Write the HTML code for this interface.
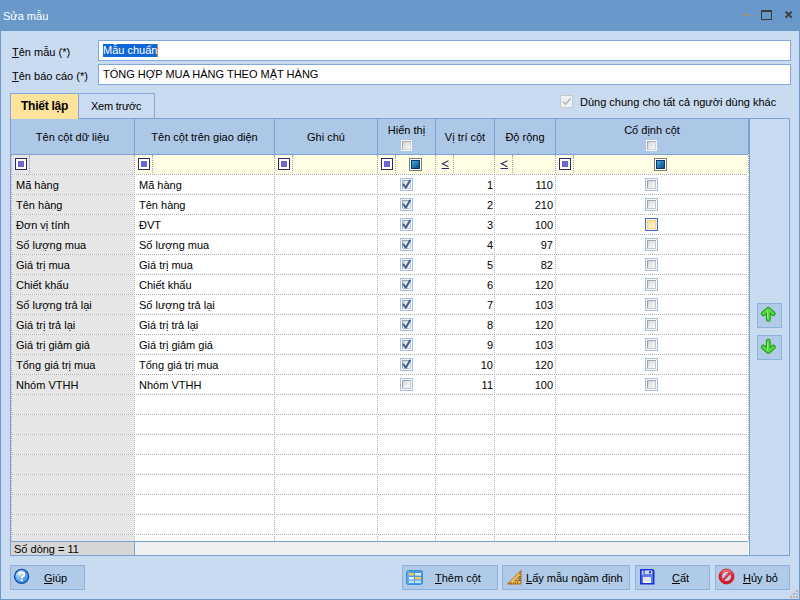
<!DOCTYPE html>
<html><head><meta charset="utf-8">
<style>
*,*:before,*:after{box-sizing:border-box;margin:0;padding:0}
html,body{width:800px;height:600px;overflow:hidden;font-family:"Liberation Sans",sans-serif;font-size:11px;color:#000}
.a{position:absolute}
.t{position:absolute;white-space:nowrap;line-height:13px}
.u{text-decoration:underline;text-underline-offset:1px}
.hd{position:absolute;white-space:nowrap;line-height:13px}
.hl{position:absolute;height:1px;background:repeating-linear-gradient(to right,#a0a0a0 0 1px,transparent 1px 2px)}
.vl{position:absolute;width:1px;background:repeating-linear-gradient(to bottom,#a0a0a0 0 1px,transparent 1px 2px)}
.fi{position:absolute;width:12px;height:12px;border:1px solid #2b2b6b;background:#fffff4}
.fi:after{content:"";position:absolute;left:2px;top:2px;width:6px;height:6px;background:#6a66d4}
.bq{position:absolute;width:13px;height:13px;border:1px solid #7a7a7a;background:#fff}
.bq:after{content:"";position:absolute;left:1px;top:1px;width:9px;height:9px;border:1px solid #10385e;background:linear-gradient(135deg,#3fb2e6,#1a6fa8 60%,#0e4a7c)}
.cb{position:absolute;width:13px;height:13px;border:1px solid #a2c0e5;background:#fcfcfa}
.cb:before{content:"";position:absolute;left:1px;top:1px;width:9px;height:9px;border:1px solid;border-color:#9ea6b1 #c4c9cf #c4c9cf #9ea6b1;background:linear-gradient(135deg,#d2d6db,#eceef0 55%,#f8f8f8);}
.cbh{position:absolute;width:11px;height:11px;border:1px solid #f6f6f4;background:#f6f6f4}
.cbh:before{content:"";position:absolute;left:0;top:0;width:9px;height:9px;border:1px solid;border-color:#a8adb3 #cfd2d6 #cfd2d6 #a8adb3;background:linear-gradient(135deg,#cdd0d4,#e9eaec 55%,#f8f8f8)}
.btn{position:absolute;height:25px;background:#b0cbe8;border:1px solid #8db0dc}
</style></head><body>
<div class="a" style="left:0;top:0;width:800px;height:600px;background:#6a98ca"></div>
<div class="a" style="left:1px;top:31px;width:798px;height:568px;background:#c9dbf0"></div>

<div class="t" style="left:3px;top:10px;color:#fff;font-size:11px">Sửa mẫu</div>
<div class="a" style="left:743px;top:14px;width:7px;height:2px;background:#a3907f"></div>
<div class="a" style="left:761px;top:10px;width:11px;height:10px;border:1px solid #3c3c3c;border-top-width:2px"></div>
<svg class="a" style="left:784px;top:10px" width="10" height="10"><path d="M1.6 1.6L7.6 7.6M7.6 1.6L1.6 7.6" stroke="#3c3c3c" stroke-width="2"/></svg>
<div class="t" style="left:12px;top:46px"><span class="u">T</span>ên mẫu (*)</div>
<div class="t" style="left:12px;top:70px"><span class="u">T</span>ên báo cáo (*)</div>
<div class="a" style="left:98px;top:40px;width:693px;height:21px;background:#fff;border:1px solid #84a8d9"></div>
<div class="a" style="left:98px;top:64px;width:693px;height:21px;background:#fff;border:1px solid #84a8d9"></div>
<div class="a" style="left:103px;top:44px;width:55px;height:13px;background:#0f66d8"></div>
<div class="a" style="left:157px;top:44px;width:1px;height:13px;background:#e08030"></div>
<div class="t" style="left:103px;top:44px;color:#fff">Mẫu chuẩn</div>
<div class="t" style="left:103px;top:68px">TỔNG HỢP MUA HÀNG THEO MẶT HÀNG</div>
<div class="a" style="left:10px;top:93px;width:69px;height:26px;background:#fde39c;border:1px solid #84a8d9;border-bottom:none"></div>
<div class="a" style="left:78px;top:93px;width:77px;height:26px;background:#cadcf1;border:1px solid #84a8d9;border-bottom:none"></div>
<div class="t" style="left:21px;top:100px;font-weight:bold;font-size:12px;letter-spacing:-0.25px">Thiết lập</div>
<div class="t" style="left:91px;top:100px;letter-spacing:-0.25px">Xem trước</div>
<div class="a" style="left:560px;top:95px;width:13px;height:13px;border:1px solid #c6c9cc;background:#eef1f4"></div>
<svg class="a" style="left:560px;top:95px" width="13" height="13"><path d="M3 6.5L5.5 9L10.5 3.5" stroke="#b4b8bc" stroke-width="1.6" fill="none"/></svg>
<div class="t" style="left:580px;top:96px">Dùng chung cho tất cả người dùng khác</div>
<div class="a" style="left:10px;top:118px;width:740px;height:438px;background:#fff;border:1px solid #79a1d2"></div>
<div class="a" style="left:11px;top:119px;width:737px;height:35px;background:#adc8e6"></div>
<div class="a" style="left:11px;top:154px;width:737px;height:1px;background:#79a1d2"></div>
<div class="a" style="left:134px;top:119px;width:1px;height:35px;background:#79a1d2"></div>
<div class="a" style="left:274px;top:119px;width:1px;height:35px;background:#79a1d2"></div>
<div class="a" style="left:377px;top:119px;width:1px;height:35px;background:#79a1d2"></div>
<div class="a" style="left:435px;top:119px;width:1px;height:35px;background:#79a1d2"></div>
<div class="a" style="left:494px;top:119px;width:1px;height:35px;background:#79a1d2"></div>
<div class="a" style="left:555px;top:119px;width:1px;height:35px;background:#79a1d2"></div>
<div class="a" style="left:748px;top:119px;width:1px;height:35px;background:#79a1d2"></div>
<div class="a" style="left:11px;top:118px;width:67px;height:1px;background:#fde39c"></div>
<div class="hd" style="left:11px;width:123px;top:131px;text-align:center">Tên cột dữ liệu</div>
<div class="hd" style="left:135px;width:139px;top:131px;text-align:center">Tên cột trên giao diện</div>
<div class="hd" style="left:275px;width:102px;top:131px;text-align:center">Ghi chú</div>
<div class="hd" style="left:378px;width:57px;top:124px;text-align:center">Hiển thị</div>
<div class="cbh" style="left:401px;top:140px"></div>
<div class="hd" style="left:436px;width:58px;top:131px;text-align:center">Vị trí cột</div>
<div class="hd" style="left:495px;width:60px;top:131px;text-align:center">Độ rộng</div>
<div class="hd" style="left:556px;width:192px;top:124px;text-align:center">Cố định cột</div>
<div class="cbh" style="left:646px;top:140px"></div>
<div class="a" style="left:11px;top:155px;width:737px;height:19px;background:#fffde3"></div>
<div class="a" style="left:11px;top:155px;width:123px;height:386px;background:#e6e6e6"></div>
<div class="fi" style="left:15px;top:158px"></div>
<div class="fi" style="left:138px;top:158px"></div>
<div class="fi" style="left:278px;top:158px"></div>
<div class="fi" style="left:381px;top:158px"></div>
<div class="fi" style="left:559px;top:158px"></div>
<div class="a" style="left:29px;top:155px;width:1px;height:19px;background:repeating-linear-gradient(to bottom,#a0a0a0 0 1px,transparent 1px 2px);background-position:0 1px"></div>
<div class="a" style="left:152px;top:155px;width:1px;height:19px;background:repeating-linear-gradient(to bottom,#a0a0a0 0 1px,transparent 1px 2px);background-position:0 1px"></div>
<div class="a" style="left:292px;top:155px;width:1px;height:19px;background:repeating-linear-gradient(to bottom,#a0a0a0 0 1px,transparent 1px 2px);background-position:0 1px"></div>
<div class="a" style="left:395px;top:155px;width:1px;height:19px;background:repeating-linear-gradient(to bottom,#a0a0a0 0 1px,transparent 1px 2px);background-position:0 1px"></div>
<div class="a" style="left:573px;top:155px;width:1px;height:19px;background:repeating-linear-gradient(to bottom,#a0a0a0 0 1px,transparent 1px 2px);background-position:0 1px"></div>
<div class="bq" style="left:409px;top:158px"></div>
<div class="bq" style="left:654px;top:158px"></div>
<svg class="a" style="left:441px;top:160px" width="9" height="10"><path d="M7.5 0.8L1.2 3.8L7.5 6.8" stroke="#2b2b6b" stroke-width="1.1" fill="none"/><path d="M0.5 8.5H8" stroke="#2b2b6b" stroke-width="1"/></svg>
<svg class="a" style="left:500px;top:160px" width="9" height="10"><path d="M7.5 0.8L1.2 3.8L7.5 6.8" stroke="#2b2b6b" stroke-width="1.1" fill="none"/><path d="M0.5 8.5H8" stroke="#2b2b6b" stroke-width="1"/></svg>
<div class="a" style="left:453px;top:155px;width:1px;height:19px;background:repeating-linear-gradient(to bottom,#a0a0a0 0 1px,transparent 1px 2px);background-position:0 1px"></div>
<div class="a" style="left:512px;top:155px;width:1px;height:19px;background:repeating-linear-gradient(to bottom,#a0a0a0 0 1px,transparent 1px 2px);background-position:0 1px"></div>
<div class="a" style="left:11px;top:155px;width:1px;height:19px;background:repeating-linear-gradient(to bottom,#b0b0b0 0 1px,transparent 1px 2px);background-position:0 1px"></div>
<div class="a" style="left:11px;top:175px;width:1px;height:366px;background:repeating-linear-gradient(to bottom,#b0b0b0 0 1px,#f8f8f8 1px 2px);background-position:0 1px"></div>
<div class="a" style="left:134px;top:155px;width:1px;height:19px;background:repeating-linear-gradient(to bottom,#a0a0a0 0 1px,transparent 1px 2px);background-position:0 1px"></div>
<div class="a" style="left:134px;top:175px;width:1px;height:366px;background:repeating-linear-gradient(to bottom,#b0b0b0 0 1px,#ffffff 1px 2px);background-position:0 1px"></div>
<div class="a" style="left:274px;top:155px;width:1px;height:19px;background:repeating-linear-gradient(to bottom,#a0a0a0 0 1px,transparent 1px 2px);background-position:0 1px"></div>
<div class="a" style="left:274px;top:175px;width:1px;height:366px;background:repeating-linear-gradient(to bottom,#b0b0b0 0 1px,#ffffff 1px 2px);background-position:0 1px"></div>
<div class="a" style="left:377px;top:155px;width:1px;height:19px;background:repeating-linear-gradient(to bottom,#a0a0a0 0 1px,transparent 1px 2px);background-position:0 1px"></div>
<div class="a" style="left:377px;top:175px;width:1px;height:366px;background:repeating-linear-gradient(to bottom,#b0b0b0 0 1px,#ffffff 1px 2px);background-position:0 1px"></div>
<div class="a" style="left:435px;top:155px;width:1px;height:19px;background:repeating-linear-gradient(to bottom,#a0a0a0 0 1px,transparent 1px 2px);background-position:0 1px"></div>
<div class="a" style="left:435px;top:175px;width:1px;height:366px;background:repeating-linear-gradient(to bottom,#b0b0b0 0 1px,#ffffff 1px 2px);background-position:0 1px"></div>
<div class="a" style="left:494px;top:155px;width:1px;height:19px;background:repeating-linear-gradient(to bottom,#a0a0a0 0 1px,transparent 1px 2px);background-position:0 1px"></div>
<div class="a" style="left:494px;top:175px;width:1px;height:366px;background:repeating-linear-gradient(to bottom,#b0b0b0 0 1px,#ffffff 1px 2px);background-position:0 1px"></div>
<div class="a" style="left:555px;top:155px;width:1px;height:19px;background:repeating-linear-gradient(to bottom,#a0a0a0 0 1px,transparent 1px 2px);background-position:0 1px"></div>
<div class="a" style="left:555px;top:175px;width:1px;height:366px;background:repeating-linear-gradient(to bottom,#b0b0b0 0 1px,#ffffff 1px 2px);background-position:0 1px"></div>
<div class="a" style="left:748px;top:155px;width:1px;height:19px;background:repeating-linear-gradient(to bottom,#a0a0a0 0 1px,transparent 1px 2px);background-position:0 1px"></div>
<div class="a" style="left:748px;top:175px;width:1px;height:366px;background:repeating-linear-gradient(to bottom,#b0b0b0 0 1px,#ffffff 1px 2px);background-position:0 1px"></div>
<div class="a" style="left:11px;top:174px;width:123px;height:1px;background:repeating-linear-gradient(to right,#b0b0b0 0 1px,#f8f8f8 1px 2px);background-position:1px 0"></div>
<div class="a" style="left:134px;top:174px;width:614px;height:1px;background:repeating-linear-gradient(to right,#acacac 0 1px,#ffffff 1px 2px);background-position:0px 0"></div>
<div class="a" style="left:11px;top:194px;width:123px;height:1px;background:repeating-linear-gradient(to right,#b0b0b0 0 1px,#f8f8f8 1px 2px);background-position:1px 0"></div>
<div class="a" style="left:134px;top:194px;width:614px;height:1px;background:repeating-linear-gradient(to right,#acacac 0 1px,#ffffff 1px 2px);background-position:0px 0"></div>
<div class="a" style="left:11px;top:214px;width:123px;height:1px;background:repeating-linear-gradient(to right,#b0b0b0 0 1px,#f8f8f8 1px 2px);background-position:1px 0"></div>
<div class="a" style="left:134px;top:214px;width:614px;height:1px;background:repeating-linear-gradient(to right,#acacac 0 1px,#ffffff 1px 2px);background-position:0px 0"></div>
<div class="a" style="left:11px;top:234px;width:123px;height:1px;background:repeating-linear-gradient(to right,#b0b0b0 0 1px,#f8f8f8 1px 2px);background-position:1px 0"></div>
<div class="a" style="left:134px;top:234px;width:614px;height:1px;background:repeating-linear-gradient(to right,#acacac 0 1px,#ffffff 1px 2px);background-position:0px 0"></div>
<div class="a" style="left:11px;top:254px;width:123px;height:1px;background:repeating-linear-gradient(to right,#b0b0b0 0 1px,#f8f8f8 1px 2px);background-position:1px 0"></div>
<div class="a" style="left:134px;top:254px;width:614px;height:1px;background:repeating-linear-gradient(to right,#acacac 0 1px,#ffffff 1px 2px);background-position:0px 0"></div>
<div class="a" style="left:11px;top:274px;width:123px;height:1px;background:repeating-linear-gradient(to right,#b0b0b0 0 1px,#f8f8f8 1px 2px);background-position:1px 0"></div>
<div class="a" style="left:134px;top:274px;width:614px;height:1px;background:repeating-linear-gradient(to right,#acacac 0 1px,#ffffff 1px 2px);background-position:0px 0"></div>
<div class="a" style="left:11px;top:294px;width:123px;height:1px;background:repeating-linear-gradient(to right,#b0b0b0 0 1px,#f8f8f8 1px 2px);background-position:1px 0"></div>
<div class="a" style="left:134px;top:294px;width:614px;height:1px;background:repeating-linear-gradient(to right,#acacac 0 1px,#ffffff 1px 2px);background-position:0px 0"></div>
<div class="a" style="left:11px;top:314px;width:123px;height:1px;background:repeating-linear-gradient(to right,#b0b0b0 0 1px,#f8f8f8 1px 2px);background-position:1px 0"></div>
<div class="a" style="left:134px;top:314px;width:614px;height:1px;background:repeating-linear-gradient(to right,#acacac 0 1px,#ffffff 1px 2px);background-position:0px 0"></div>
<div class="a" style="left:11px;top:334px;width:123px;height:1px;background:repeating-linear-gradient(to right,#b0b0b0 0 1px,#f8f8f8 1px 2px);background-position:1px 0"></div>
<div class="a" style="left:134px;top:334px;width:614px;height:1px;background:repeating-linear-gradient(to right,#acacac 0 1px,#ffffff 1px 2px);background-position:0px 0"></div>
<div class="a" style="left:11px;top:354px;width:123px;height:1px;background:repeating-linear-gradient(to right,#b0b0b0 0 1px,#f8f8f8 1px 2px);background-position:1px 0"></div>
<div class="a" style="left:134px;top:354px;width:614px;height:1px;background:repeating-linear-gradient(to right,#acacac 0 1px,#ffffff 1px 2px);background-position:0px 0"></div>
<div class="a" style="left:11px;top:374px;width:123px;height:1px;background:repeating-linear-gradient(to right,#b0b0b0 0 1px,#f8f8f8 1px 2px);background-position:1px 0"></div>
<div class="a" style="left:134px;top:374px;width:614px;height:1px;background:repeating-linear-gradient(to right,#acacac 0 1px,#ffffff 1px 2px);background-position:0px 0"></div>
<div class="a" style="left:11px;top:394px;width:123px;height:1px;background:repeating-linear-gradient(to right,#b0b0b0 0 1px,#f8f8f8 1px 2px);background-position:1px 0"></div>
<div class="a" style="left:134px;top:394px;width:614px;height:1px;background:repeating-linear-gradient(to right,#acacac 0 1px,#ffffff 1px 2px);background-position:0px 0"></div>
<div class="a" style="left:11px;top:414px;width:123px;height:1px;background:repeating-linear-gradient(to right,#b0b0b0 0 1px,#f8f8f8 1px 2px);background-position:1px 0"></div>
<div class="a" style="left:134px;top:414px;width:614px;height:1px;background:repeating-linear-gradient(to right,#acacac 0 1px,#ffffff 1px 2px);background-position:0px 0"></div>
<div class="a" style="left:11px;top:434px;width:123px;height:1px;background:repeating-linear-gradient(to right,#b0b0b0 0 1px,#f8f8f8 1px 2px);background-position:1px 0"></div>
<div class="a" style="left:134px;top:434px;width:614px;height:1px;background:repeating-linear-gradient(to right,#acacac 0 1px,#ffffff 1px 2px);background-position:0px 0"></div>
<div class="a" style="left:11px;top:454px;width:123px;height:1px;background:repeating-linear-gradient(to right,#b0b0b0 0 1px,#f8f8f8 1px 2px);background-position:1px 0"></div>
<div class="a" style="left:134px;top:454px;width:614px;height:1px;background:repeating-linear-gradient(to right,#acacac 0 1px,#ffffff 1px 2px);background-position:0px 0"></div>
<div class="a" style="left:11px;top:474px;width:123px;height:1px;background:repeating-linear-gradient(to right,#b0b0b0 0 1px,#f8f8f8 1px 2px);background-position:1px 0"></div>
<div class="a" style="left:134px;top:474px;width:614px;height:1px;background:repeating-linear-gradient(to right,#acacac 0 1px,#ffffff 1px 2px);background-position:0px 0"></div>
<div class="a" style="left:11px;top:494px;width:123px;height:1px;background:repeating-linear-gradient(to right,#b0b0b0 0 1px,#f8f8f8 1px 2px);background-position:1px 0"></div>
<div class="a" style="left:134px;top:494px;width:614px;height:1px;background:repeating-linear-gradient(to right,#acacac 0 1px,#ffffff 1px 2px);background-position:0px 0"></div>
<div class="a" style="left:11px;top:514px;width:123px;height:1px;background:repeating-linear-gradient(to right,#b0b0b0 0 1px,#f8f8f8 1px 2px);background-position:1px 0"></div>
<div class="a" style="left:134px;top:514px;width:614px;height:1px;background:repeating-linear-gradient(to right,#acacac 0 1px,#ffffff 1px 2px);background-position:0px 0"></div>
<div class="a" style="left:11px;top:534px;width:123px;height:1px;background:repeating-linear-gradient(to right,#b0b0b0 0 1px,#f8f8f8 1px 2px);background-position:1px 0"></div>
<div class="a" style="left:134px;top:534px;width:614px;height:1px;background:repeating-linear-gradient(to right,#acacac 0 1px,#ffffff 1px 2px);background-position:0px 0"></div>
<div class="t" style="left:16px;top:179px">Mã hàng</div>
<div class="t" style="left:139px;top:179px">Mã hàng</div>
<div class="t" style="right:307px;top:179px">1</div>
<div class="t" style="right:247px;top:179px">110</div>
<div class="cb" style="left:400px;top:178px"></div>
<svg class="a" style="left:400px;top:178px" width="13" height="13"><path d="M3.5 6.5L5.8 9.8L10 2.5" stroke="#3a5e9c" stroke-width="2" fill="none" stroke-linecap="round" stroke-linejoin="round"/></svg>
<div class="cb" style="left:645px;top:178px"></div>
<div class="t" style="left:16px;top:199px">Tên hàng</div>
<div class="t" style="left:139px;top:199px">Tên hàng</div>
<div class="t" style="right:307px;top:199px">2</div>
<div class="t" style="right:247px;top:199px">210</div>
<div class="cb" style="left:400px;top:198px"></div>
<svg class="a" style="left:400px;top:198px" width="13" height="13"><path d="M3.5 6.5L5.8 9.8L10 2.5" stroke="#3a5e9c" stroke-width="2" fill="none" stroke-linecap="round" stroke-linejoin="round"/></svg>
<div class="cb" style="left:645px;top:198px"></div>
<div class="t" style="left:16px;top:219px">Đơn vị tính</div>
<div class="t" style="left:139px;top:219px">ĐVT</div>
<div class="t" style="right:307px;top:219px">3</div>
<div class="t" style="right:247px;top:219px">100</div>
<div class="cb" style="left:400px;top:218px"></div>
<svg class="a" style="left:400px;top:218px" width="13" height="13"><path d="M3.5 6.5L5.8 9.8L10 2.5" stroke="#3a5e9c" stroke-width="2" fill="none" stroke-linecap="round" stroke-linejoin="round"/></svg>
<div class="a" style="left:645px;top:218px;width:13px;height:13px;border:1px solid #4a6fa8;background:#eef4fc"><div class="a" style="left:1px;top:1px;width:9px;height:9px;border:1px solid #f7d278;background:linear-gradient(135deg,#fbdc8e,#fdebc0 55%,#fff8e8)"></div></div>
<div class="t" style="left:16px;top:239px">Số lượng mua</div>
<div class="t" style="left:139px;top:239px">Số lượng mua</div>
<div class="t" style="right:307px;top:239px">4</div>
<div class="t" style="right:247px;top:239px">97</div>
<div class="cb" style="left:400px;top:238px"></div>
<svg class="a" style="left:400px;top:238px" width="13" height="13"><path d="M3.5 6.5L5.8 9.8L10 2.5" stroke="#3a5e9c" stroke-width="2" fill="none" stroke-linecap="round" stroke-linejoin="round"/></svg>
<div class="cb" style="left:645px;top:238px"></div>
<div class="t" style="left:16px;top:259px">Giá trị mua</div>
<div class="t" style="left:139px;top:259px">Giá trị mua</div>
<div class="t" style="right:307px;top:259px">5</div>
<div class="t" style="right:247px;top:259px">82</div>
<div class="cb" style="left:400px;top:258px"></div>
<svg class="a" style="left:400px;top:258px" width="13" height="13"><path d="M3.5 6.5L5.8 9.8L10 2.5" stroke="#3a5e9c" stroke-width="2" fill="none" stroke-linecap="round" stroke-linejoin="round"/></svg>
<div class="cb" style="left:645px;top:258px"></div>
<div class="t" style="left:16px;top:279px">Chiết khấu</div>
<div class="t" style="left:139px;top:279px">Chiết khấu</div>
<div class="t" style="right:307px;top:279px">6</div>
<div class="t" style="right:247px;top:279px">120</div>
<div class="cb" style="left:400px;top:278px"></div>
<svg class="a" style="left:400px;top:278px" width="13" height="13"><path d="M3.5 6.5L5.8 9.8L10 2.5" stroke="#3a5e9c" stroke-width="2" fill="none" stroke-linecap="round" stroke-linejoin="round"/></svg>
<div class="cb" style="left:645px;top:278px"></div>
<div class="t" style="left:16px;top:299px">Số lượng trả lại</div>
<div class="t" style="left:139px;top:299px">Số lượng trả lại</div>
<div class="t" style="right:307px;top:299px">7</div>
<div class="t" style="right:247px;top:299px">103</div>
<div class="cb" style="left:400px;top:298px"></div>
<svg class="a" style="left:400px;top:298px" width="13" height="13"><path d="M3.5 6.5L5.8 9.8L10 2.5" stroke="#3a5e9c" stroke-width="2" fill="none" stroke-linecap="round" stroke-linejoin="round"/></svg>
<div class="cb" style="left:645px;top:298px"></div>
<div class="t" style="left:16px;top:319px">Giá trị trả lại</div>
<div class="t" style="left:139px;top:319px">Giá trị trả lại</div>
<div class="t" style="right:307px;top:319px">8</div>
<div class="t" style="right:247px;top:319px">120</div>
<div class="cb" style="left:400px;top:318px"></div>
<svg class="a" style="left:400px;top:318px" width="13" height="13"><path d="M3.5 6.5L5.8 9.8L10 2.5" stroke="#3a5e9c" stroke-width="2" fill="none" stroke-linecap="round" stroke-linejoin="round"/></svg>
<div class="cb" style="left:645px;top:318px"></div>
<div class="t" style="left:16px;top:339px">Giá trị giảm giá</div>
<div class="t" style="left:139px;top:339px">Giá trị giảm giá</div>
<div class="t" style="right:307px;top:339px">9</div>
<div class="t" style="right:247px;top:339px">103</div>
<div class="cb" style="left:400px;top:338px"></div>
<svg class="a" style="left:400px;top:338px" width="13" height="13"><path d="M3.5 6.5L5.8 9.8L10 2.5" stroke="#3a5e9c" stroke-width="2" fill="none" stroke-linecap="round" stroke-linejoin="round"/></svg>
<div class="cb" style="left:645px;top:338px"></div>
<div class="t" style="left:16px;top:359px">Tổng giá trị mua</div>
<div class="t" style="left:139px;top:359px">Tổng giá trị mua</div>
<div class="t" style="right:307px;top:359px">10</div>
<div class="t" style="right:247px;top:359px">120</div>
<div class="cb" style="left:400px;top:358px"></div>
<svg class="a" style="left:400px;top:358px" width="13" height="13"><path d="M3.5 6.5L5.8 9.8L10 2.5" stroke="#3a5e9c" stroke-width="2" fill="none" stroke-linecap="round" stroke-linejoin="round"/></svg>
<div class="cb" style="left:645px;top:358px"></div>
<div class="t" style="left:16px;top:379px">Nhóm VTHH</div>
<div class="t" style="left:139px;top:379px">Nhóm VTHH</div>
<div class="t" style="right:307px;top:379px">11</div>
<div class="t" style="right:247px;top:379px">100</div>
<div class="cb" style="left:400px;top:378px"></div>
<div class="cb" style="left:645px;top:378px"></div>
<div class="a" style="left:11px;top:541px;width:737px;height:1px;background:#79a1d2"></div>
<div class="a" style="left:11px;top:542px;width:123px;height:13px;background:#d6d6d6"></div>
<div class="a" style="left:134px;top:542px;width:1px;height:13px;background:#79a1d2"></div>
<div class="a" style="left:135px;top:542px;width:613px;height:13px;background:#efefef"></div>
<div class="t" style="left:14px;top:543px">Số dòng = 11</div>
<div class="a" style="left:749px;top:118px;width:41px;height:438px;background:#c9dbf0;border:1px solid #79a1d2"></div>
<div class="btn" style="left:757px;top:303px;width:25px"></div>
<svg class="a" style="left:757px;top:303px" width="25" height="25"><g fill="none" stroke-linecap="round" stroke-linejoin="round"><path d="M6.4 10.6L11.3 6.2L16.2 10.6 M11.3 6.5V16.4" stroke="#1f9a16" stroke-width="4.9"/><path d="M6.4 10.6L11.3 6.2L16.2 10.6 M11.3 6.5V16.4" stroke="#52d443" stroke-width="2.9"/><path d="M10.7 8V15" stroke="#b6f5a4" stroke-width="1" opacity="0.8"/></g></svg>
<div class="btn" style="left:757px;top:335px;width:25px"></div>
<svg class="a" style="left:757px;top:335px" width="25" height="25"><g fill="none" stroke-linecap="round" stroke-linejoin="round"><path d="M6.4 12.2L11.3 16.4L16.2 12.2 M11.3 6.3V16.2" stroke="#1f9a16" stroke-width="4.9"/><path d="M6.4 12.2L11.3 16.4L16.2 12.2 M11.3 6.3V16.2" stroke="#52d443" stroke-width="2.9"/><path d="M10.7 8V15" stroke="#b6f5a4" stroke-width="1" opacity="0.8"/></g></svg>
<div class="btn" style="left:10px;top:565px;width:75px"></div>
<div class="t" style="left:44px;top:572px"><span class="u">G</span>iúp</div>
<div class="btn" style="left:402px;top:565px;width:96px"></div>
<div class="t" style="left:435px;top:572px"><span class="u">T</span>hêm cột</div>
<div class="btn" style="left:502px;top:565px;width:128px"></div>
<div class="t" style="left:526px;top:572px"><span class="u">L</span>ấy mẫu ngầm định</div>
<div class="btn" style="left:635px;top:565px;width:75px"></div>
<div class="t" style="left:672px;top:572px"><span class="u">C</span>ất</div>
<div class="btn" style="left:715px;top:565px;width:75px"></div>
<div class="t" style="left:743px;top:572px"><span class="u">H</span>ủy bỏ</div>
<svg class="a" style="left:13px;top:568px" width="18" height="18"><defs><radialGradient id="hg" cx="0.35" cy="0.3" r="0.8"><stop offset="0" stop-color="#cfe6ff"/><stop offset="0.5" stop-color="#6fb0f2"/><stop offset="1" stop-color="#2f7ad8"/></radialGradient></defs><circle cx="8.6" cy="8.4" r="7" fill="url(#hg)" stroke="#0e4fa8" stroke-width="1.4"/><path d="M6.2 6.6Q6.2 4.4 8.7 4.4Q11.2 4.4 11.2 6.5Q11.2 7.8 9.6 8.6Q8.7 9.1 8.7 10.3" fill="none" stroke="#fff" stroke-width="1.9"/><rect x="7.7" y="11.3" width="2" height="1.9" fill="#fff"/></svg>
<svg class="a" style="left:406px;top:570px" width="17" height="15"><rect x="0.5" y="0.5" width="16" height="14" rx="2" fill="#4b9be3" stroke="#3d8ad8" stroke-width="1"/><rect x="1.5" y="1.5" width="2" height="12" fill="#6ab2f0"/><rect x="3" y="3" width="5" height="2.5" fill="#f5c94e"/><rect x="9" y="3" width="6" height="2.5" fill="#ddeeff"/><rect x="3" y="7" width="5" height="2.5" fill="#f4f9ff"/><rect x="9" y="7" width="6" height="2.5" fill="#f5c94e"/><rect x="3" y="10.5" width="5" height="2.5" fill="#bfe0fb"/><rect x="9" y="10.5" width="6" height="2.5" fill="#bfe0fb"/></svg>
<svg class="a" style="left:506px;top:569px" width="17" height="17"><defs><linearGradient id="rg" x1="0" y1="0" x2="1" y2="1"><stop offset="0" stop-color="#fde08a"/><stop offset="1" stop-color="#e8b040"/></linearGradient></defs><path d="M1.5 15L15 1.5V15Z" fill="url(#rg)" stroke="#a66c20" stroke-width="1" stroke-linejoin="round"/><path d="M8.8 11.8L13.2 7.4V11.8Z" fill="#b0cbe8" stroke="#9a6418" stroke-width="1"/><path d="M3.5 13.2V15M5.5 13.2V15M7.5 13.2V15M9.5 13.2V15M11.5 13.2V15M13.2 3.5H15M13.2 5.5H15M13.2 7.5H15M13.2 9.5H15M13.2 11.5H15" stroke="#9a6418" stroke-width="1"/></svg>
<svg class="a" style="left:640px;top:569px" width="15" height="16"><path d="M0.75 0.75H12.5L13.75 2V14.75H0.75Z" fill="#5b7ae6" stroke="#1830d4" stroke-width="1.5"/><rect x="1.8" y="1.5" width="1.6" height="4.5" fill="#b4c4f4"/><rect x="5" y="1.5" width="7" height="3.6" fill="#d8d8d8"/><rect x="9" y="2" width="2" height="2.4" fill="#2a48e0"/><rect x="3" y="8" width="8" height="5.8" fill="#e6e6e6"/><rect x="3" y="13" width="8" height="0.8" fill="#fffbe8"/></svg>
<svg class="a" style="left:718px;top:568px" width="18" height="18"><defs><linearGradient id="cg" x1="0" y1="0" x2="0" y2="1"><stop offset="0" stop-color="#f4707a"/><stop offset="0.35" stop-color="#e2262e"/><stop offset="1" stop-color="#d41a22"/></linearGradient></defs><circle cx="8.5" cy="8.5" r="6" fill="#b8d4f2" stroke="url(#cg)" stroke-width="3"/><circle cx="8.5" cy="8.5" r="7.5" fill="none" stroke="#c41018" stroke-width="0.8"/><path d="M11.6 4.8L5.2 12" stroke="#e02830" stroke-width="2.6"/><path d="M11.2 4.6L4.9 11.6" stroke="#f6a8a8" stroke-width="0.8" stroke-dasharray="1 1"/></svg>
<div class="a" style="left:796px;top:590px;width:2px;height:2px;background:#bab3ab"></div>
<div class="a" style="left:793px;top:593px;width:2px;height:2px;background:#bab3ab"></div>
<div class="a" style="left:796px;top:593px;width:2px;height:2px;background:#bab3ab"></div>
<div class="a" style="left:790px;top:596px;width:2px;height:2px;background:#bab3ab"></div>
<div class="a" style="left:793px;top:596px;width:2px;height:2px;background:#bab3ab"></div>
<div class="a" style="left:796px;top:596px;width:2px;height:2px;background:#bab3ab"></div>
</body></html>
